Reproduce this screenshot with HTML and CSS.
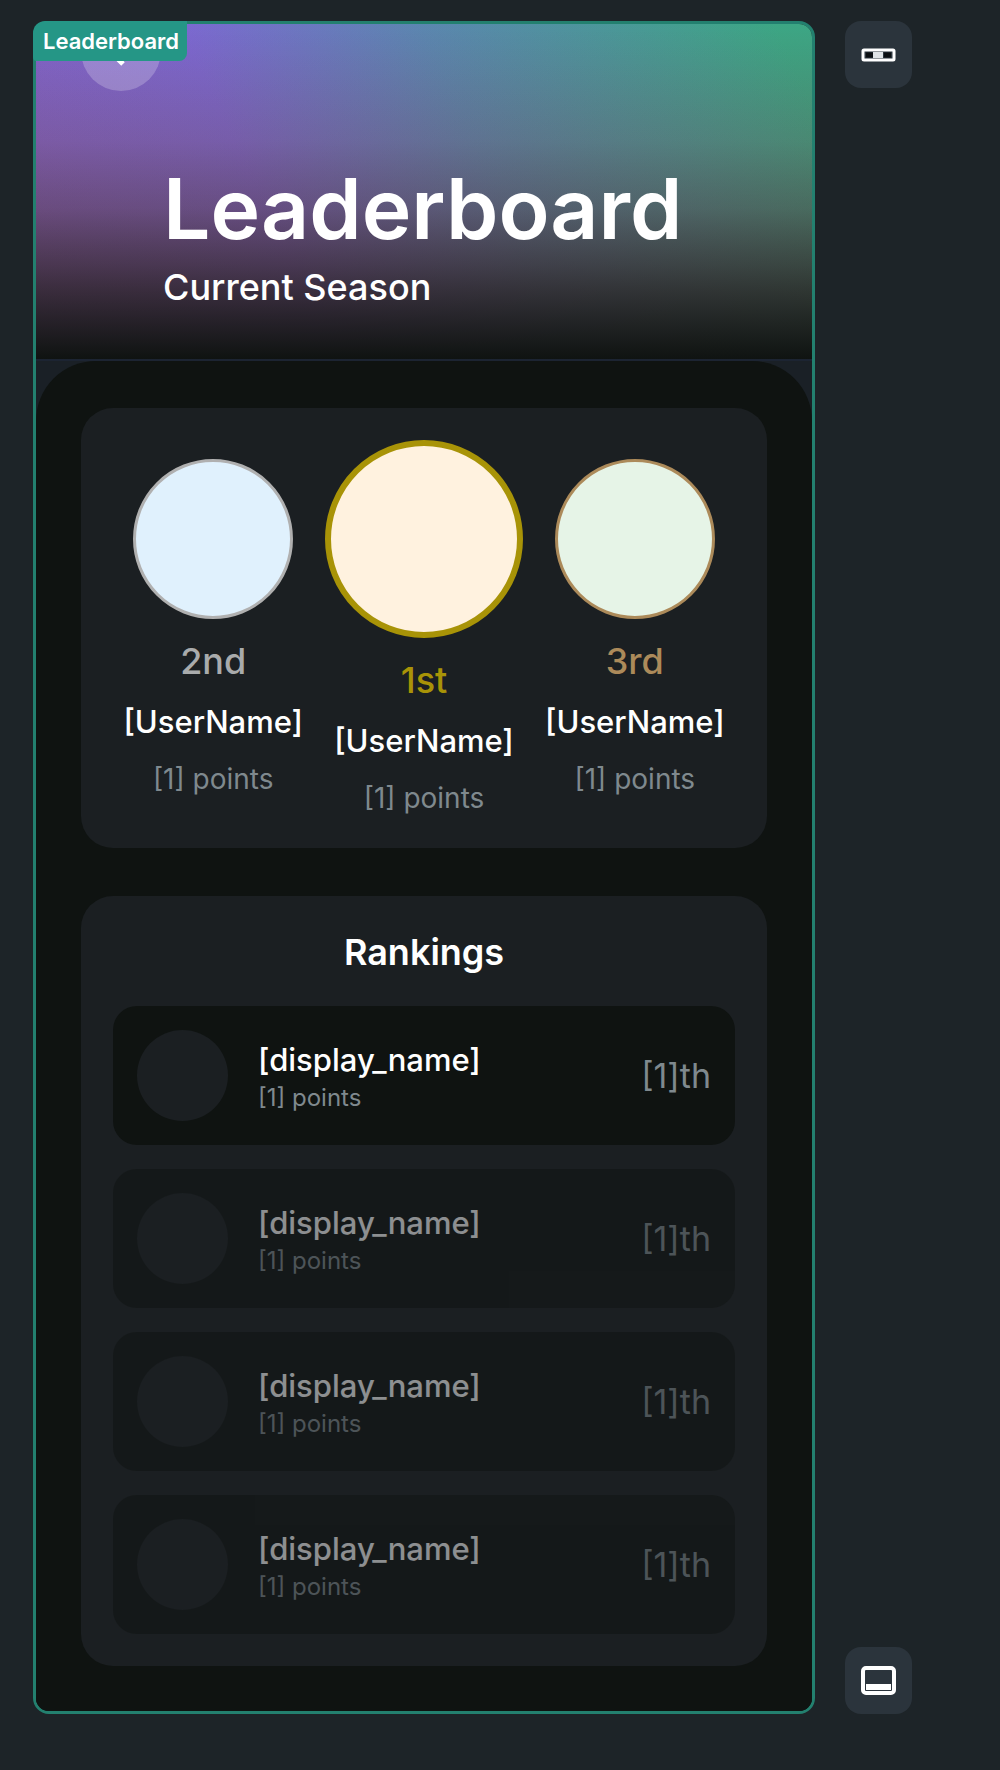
FILE: index.html
```html
<!DOCTYPE html>
<html lang="en">
<head>
    <meta charset="UTF-8">
    <meta name="viewport" content="width=device-width, initial-scale=1.0">
    <title>Leaderboard</title>
    <link rel="stylesheet" href="styles.css">
</head>
<body>
    <div class="canvas">
        <div class="frame">
            <span class="frame-label">Leaderboard</span>
            <main class="screen">
                <header class="header">
                    <button class="back-btn" aria-label="Back">
                        <svg width="40" height="40" viewBox="0 0 40 40" fill="none" stroke="#fff" stroke-width="5">
                            <path d="M22 7 L9 20 L22 33"/>
                        </svg>
                    </button>
                    <div class="heading">
                        <h1>Leaderboard</h1>
                        <p>Current Season</p>
                    </div>
                </header>

                <div class="content">
                    <div class="sheet">
                        <section class="card podium">
                            <div class="place second">
                                <div class="medal"></div>
                                <span class="position">2nd</span>
                                <span class="username">[UserName]</span>
                                <span class="points">[1] points</span>
                            </div>
                            <div class="place first">
                                <div class="medal"></div>
                                <span class="position">1st</span>
                                <span class="username">[UserName]</span>
                                <span class="points">[1] points</span>
                            </div>
                            <div class="place third">
                                <div class="medal"></div>
                                <span class="position">3rd</span>
                                <span class="username">[UserName]</span>
                                <span class="points">[1] points</span>
                            </div>
                        </section>

                        <section class="card rankings">
                            <h2>Rankings</h2>
                            <ul class="rank-list">
                                <li class="rank-row">
                                    <div class="avatar"></div>
                                    <div class="player">
                                        <span class="name">[display_name]</span>
                                        <span class="score">[1] points</span>
                                    </div>
                                    <span class="rank">[1]th</span>
                                </li>
                                <li class="rank-row faded">
                                    <div class="avatar"></div>
                                    <div class="player">
                                        <span class="name">[display_name]</span>
                                        <span class="score">[1] points</span>
                                    </div>
                                    <span class="rank">[1]th</span>
                                </li>
                                <li class="rank-row faded">
                                    <div class="avatar"></div>
                                    <div class="player">
                                        <span class="name">[display_name]</span>
                                        <span class="score">[1] points</span>
                                    </div>
                                    <span class="rank">[1]th</span>
                                </li>
                                <li class="rank-row faded">
                                    <div class="avatar"></div>
                                    <div class="player">
                                        <span class="name">[display_name]</span>
                                        <span class="score">[1] points</span>
                                    </div>
                                    <span class="rank">[1]th</span>
                                </li>
                            </ul>
                        </section>
                    </div>
                </div>
            </main>
        </div>

        <div class="tools">
            <button class="tool-btn" aria-label="App bar">
                <svg width="36" height="36" viewBox="0 0 36 36">
                    <rect x="2" y="13" width="31" height="10" rx="1" fill="none" stroke="#fff" stroke-width="3"/>
                    <rect x="12" y="15" width="10" height="6" fill="#dfe3e6"/>
                    <path d="M5 18h7M23 18h7" stroke="#0b0f12" stroke-width="5"/>
                </svg>
            </button>
            <button class="tool-btn" aria-label="Bottom bar">
                <svg width="36" height="36" viewBox="0 0 36 36">
                    <rect x="2" y="5" width="31" height="25" rx="3" fill="none" stroke="#fff" stroke-width="4"/>
                    <path d="M5 24h25" stroke="#fff" stroke-width="6"/>
                </svg>
            </button>
        </div>
    </div>
</body>
</html>
```

FILE: styles.css
```css
* {
    box-sizing: border-box;
}
body {
    font-family: Inter, "Liberation Sans", sans-serif;
    font-weight: 500;
    margin: 0;
    background-color: #1d2428;
    color: #fff;
}
h1, h2, p, ul {
    margin: 0;
    padding: 0;
}
button {
    border: none;
    padding: 0;
    display: flex;
    align-items: center;
    justify-content: center;
    cursor: pointer;
}
.canvas {
    display: flex;
    gap: 30px;
    padding: 21px 88px 56px 33px;
}
.frame {
    flex: 1;
    min-width: 0;
    position: relative;
}
.frame-label {
    position: absolute;
    top: 0;
    left: 0;
    z-index: 1;
    padding: 5px 8px 5px 10px;
    background: #259686;
    border-radius: 12px 0 8px 4px;
    font-size: 22px;
    line-height: 30px;
    font-weight: 600;
}
.screen {
    border: 3px solid #23806f;
    border-radius: 16px;
    overflow: hidden;
    background: #0f1311;
}

/* header */
.header {
    display: flex;
    flex-direction: column;
    justify-content: flex-end;
    gap: 64px;
    height: 337px;
    padding: 0 45px 48px;
    border-bottom: 2px solid #1c2432;
    background:
        linear-gradient(to bottom, rgba(15, 19, 17, 0) 0%, rgba(15, 19, 17, 0.05) 35%, rgba(15, 19, 17, 0.2) 55%, rgba(15, 19, 17, 0.48) 72%, rgba(15, 19, 17, 0.78) 88%, rgba(15, 19, 17, 1) 100%),
        linear-gradient(to bottom, rgba(125, 75, 75, 0) 0%, rgba(125, 75, 75, 0.55) 80%),
        linear-gradient(245deg, #3ca684 4%, #5b86b0 42%, #7c68d2 68%, #8562c8 100%);
}
.back-btn {
    width: 80px;
    height: 80px;
    flex-shrink: 0;
    border-radius: 50%;
    background: rgba(255, 255, 255, 0.22);
}
.heading {
    padding-left: 82px;
}
h1 {
    font-size: 84px;
    line-height: 108px;
    font-weight: 600;
}
.heading p {
    font-size: 36px;
    line-height: 48px;
}

/* content */
.content {
    background: #1a2026;
}
.sheet {
    display: flex;
    flex-direction: column;
    gap: 48px;
    padding: 47px 45px 45px;
    background: #0f1311;
    border-radius: 60px 60px 0 0;
}
.card {
    padding: 32px;
    background: #1b1f22;
    border-radius: 32px;
}
.podium {
    display: flex;
    align-items: center;
    justify-content: center;
    gap: 22px;
}
.place {
    display: flex;
    flex-direction: column;
    align-items: center;
    gap: 20px;
}
.medal {
    width: 160px;
    height: 160px;
    border-radius: 50%;
    border: 3px solid;
}
.first .medal {
    width: 198px;
    height: 198px;
    border-width: 6px;
    border-color: #a89307;
    background: #fff2df;
}
.second .medal {
    border-color: #b0b0b0;
    background: #e0f1fd;
}
.third .medal {
    border-color: #ac8a5a;
    background: #e6f4e7;
}
.position {
    font-size: 36px;
    line-height: 44px;
}
.first .position {
    color: #a89307;
}
.second .position {
    color: #a9abac;
}
.third .position {
    color: #ac8a5a;
}
.username {
    font-size: 31px;
    line-height: 38px;
}
.points {
    font-size: 28px;
    line-height: 36px;
    font-weight: 400;
    color: #7f898e;
}

/* rankings */
h2 {
    font-size: 36px;
    line-height: 48px;
    font-weight: 600;
    text-align: center;
}
.rank-list {
    display: flex;
    flex-direction: column;
    gap: 24px;
    margin-top: 30px;
    list-style: none;
}
.rank-row {
    display: flex;
    align-items: center;
    gap: 30px;
    padding: 24px;
    background: #0f1311;
    border-radius: 24px;
}
.faded {
    opacity: 0.5;
}
.avatar {
    width: 91px;
    height: 91px;
    flex-shrink: 0;
    border-radius: 50%;
    background: #1b1f22;
}
.player {
    display: flex;
    flex: 1;
    flex-direction: column;
    gap: 2px;
    padding-top: 5px;
}
.name {
    font-size: 31px;
    line-height: 38px;
}
.score {
    font-size: 24px;
    line-height: 34px;
    font-weight: 400;
    color: #7f898e;
}
.rank {
    font-size: 34px;
    line-height: 38px;
    font-weight: 400;
    color: #7f898e;
}

/* side tools */
.tools {
    display: flex;
    flex-direction: column;
    justify-content: space-between;
}
.tool-btn {
    width: 67px;
    height: 67px;
    border-radius: 16px;
    background: #2b343c;
}
```
